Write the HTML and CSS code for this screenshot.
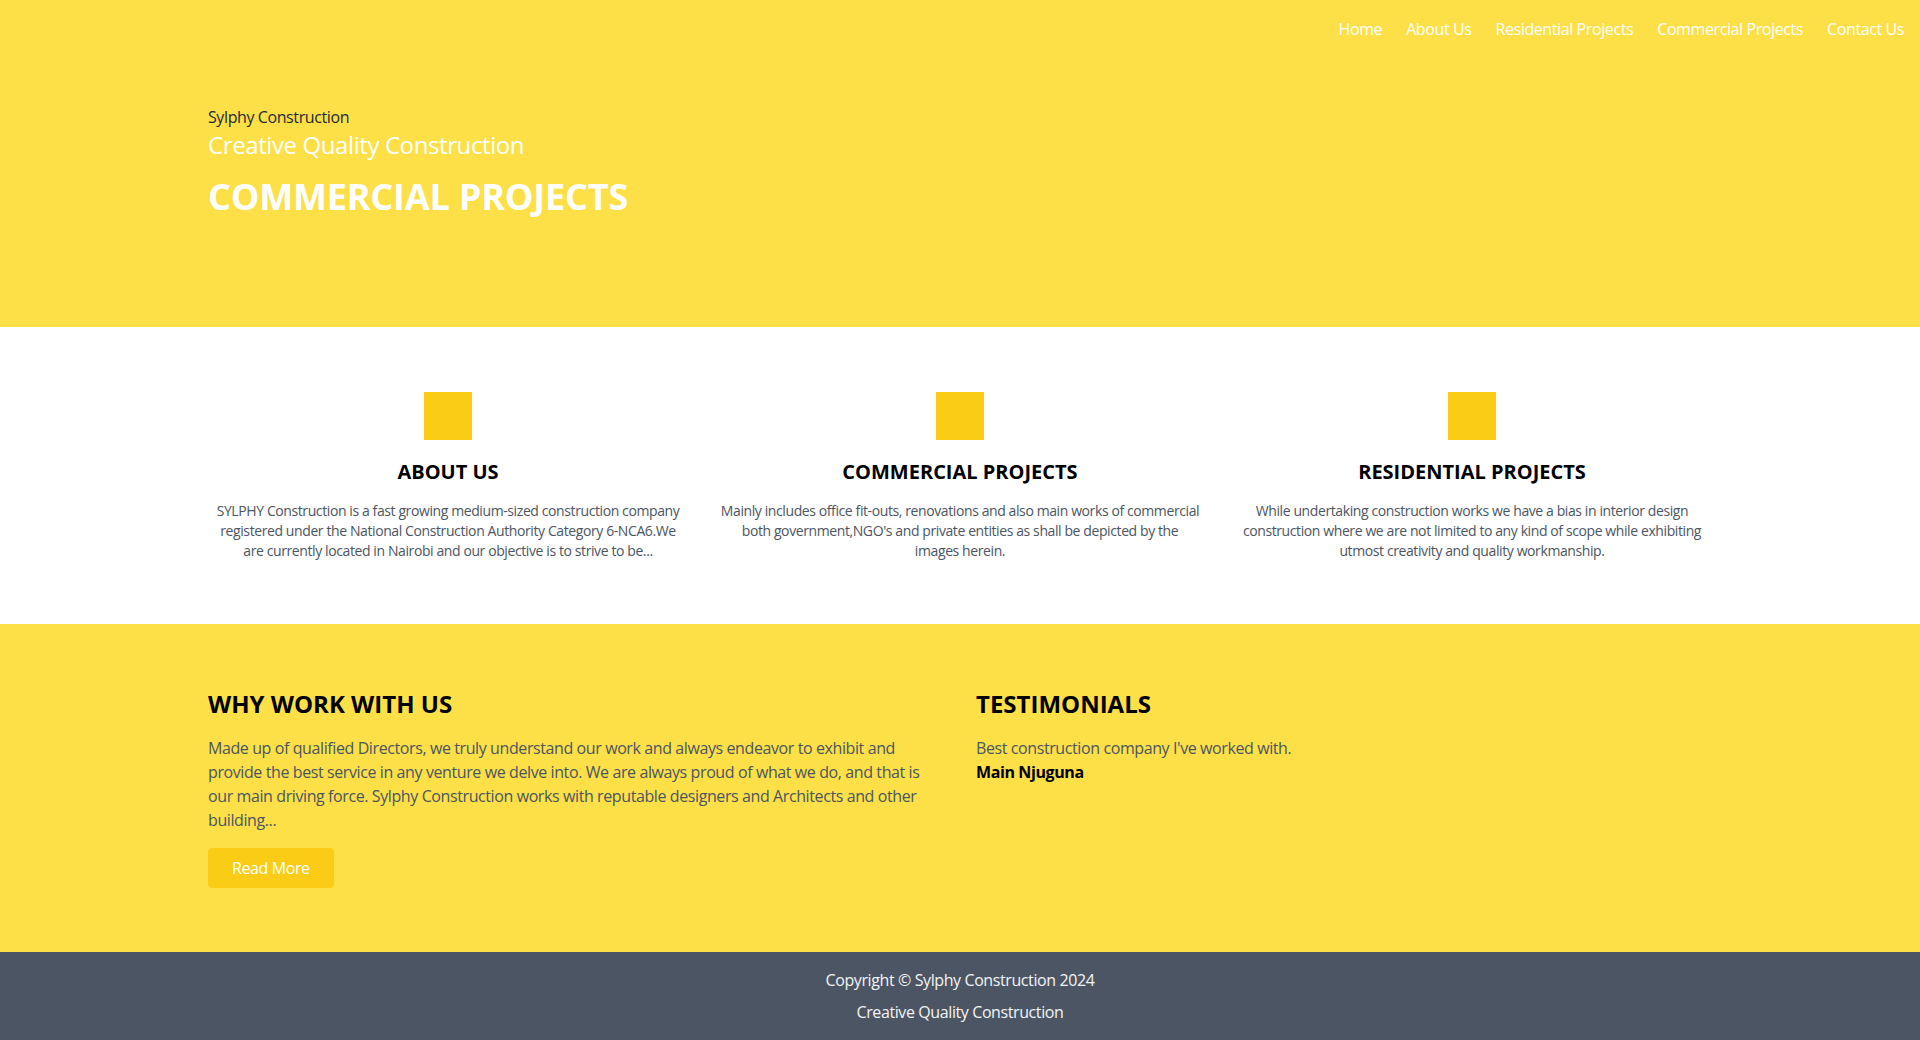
FILE: index.html
```html
<!DOCTYPE html>
<html lang="en">
<head>
<meta charset="utf-8">
<title>Commercial Projects - Sylphy Construction</title>
<link rel="stylesheet" href="styles.css">
</head>
<body>
<header class="hero">
  <nav class="nav">
    <a href="#">Home</a>
    <a href="#">About Us</a>
    <a href="#">Residential Projects</a>
    <a href="#">Commercial Projects</a>
    <a href="#">Contact Us</a>
  </nav>
  <div class="container hero-body">
    <p class="brand">Sylphy Construction</p>
    <p class="tagline">Creative Quality Construction</p>
    <h1 class="hero-title">COMMERCIAL PROJECTS</h1>
  </div>
</header>

<section class="features">
  <div class="container feature-grid">
    <div class="feature">
      <div class="feature-icon"></div>
      <h2 class="feature-title">ABOUT US</h2>
      <p class="feature-text">SYLPHY Construction is a fast growing medium-sized construction company registered under the National Construction Authority Category 6-NCA6.We<br>are currently located in Nairobi and our objective is to strive to be...</p>
    </div>
    <div class="feature">
      <div class="feature-icon"></div>
      <h2 class="feature-title">COMMERCIAL PROJECTS</h2>
      <p class="feature-text">Mainly includes office fit-outs, renovations and also main works of commercial both government,NGO's and private entities as shall be depicted by the images herein.</p>
    </div>
    <div class="feature">
      <div class="feature-icon"></div>
      <h2 class="feature-title">RESIDENTIAL PROJECTS</h2>
      <p class="feature-text">While undertaking construction works we have a bias in interior design construction where we are not limited to any kind of scope while exhibiting utmost creativity and quality workmanship.</p>
    </div>
  </div>
</section>

<section class="why">
  <div class="container why-grid">
    <div class="why-col">
      <h2 class="section-title">WHY WORK WITH US</h2>
      <p class="why-text">Made up of qualified Directors, we truly understand our work and always endeavor to exhibit and provide the best service in any venture we delve into. We are always proud of what we do, and that is our main driving force. Sylphy Construction works with reputable designers and Architects and other building...</p>
      <a href="#" class="btn">Read More</a>
    </div>
    <div class="why-col">
      <h2 class="section-title">TESTIMONIALS</h2>
      <p class="why-text">Best construction company I've worked with.</p>
      <p class="author">Main Njuguna</p>
    </div>
  </div>
</section>

<footer class="footer">
  <p>Copyright © Sylphy Construction 2024</p>
  <p class="footer-sub">Creative Quality Construction</p>
</footer>
</body>
</html>
```

FILE: styles.css
```css
* { box-sizing: border-box; }
html, body { margin: 0; padding: 0; }
body {
  font-family: "Open Sans", "Noto Sans", sans-serif;
  font-size: 16px;
  line-height: 24px;
  letter-spacing: -0.025em;
  color: #111827;
  background: #ffffff;
}
p, h1, h2 { margin: 0; }
h1, h2 { letter-spacing: 0; }
a { text-decoration: none; color: inherit; }

.container {
  max-width: 1536px;
  margin: 0 auto;
  padding: 0 16px;
}

.hero { background: #fde047; }
.nav {
  display: flex;
  justify-content: flex-end;
  gap: 24px;
  padding: 17px 16px 15px;
}
.nav a { color: #ffffff; font-size: 16px; line-height: 24px; }

.hero-body { padding-top: 49px; padding-bottom: 110px; }
.brand { color: #1f2937; font-size: 16px; line-height: 24px; }
.tagline { color: #ffffff; font-size: 24px; line-height: 32px; }
.hero-title {
  color: #ffffff;
  font-size: 36px;
  line-height: 40px;
  font-weight: 700;
  margin-top: 16px;
  letter-spacing: -0.005em;
}

.features { background: #ffffff; padding: 65px 0 63px; }
.feature-grid {
  display: grid;
  grid-template-columns: repeat(3, 1fr);
  gap: 32px;
}
.feature {
  display: flex;
  flex-direction: column;
  align-items: center;
  text-align: center;
}
.feature-icon { width: 48px; height: 48px; background: #facc15; }
.feature-title {
  font-size: 20px;
  line-height: 28px;
  font-weight: 700;
  color: #000;
  margin-top: 18px;
}
.feature-text {
  font-size: 14px;
  line-height: 20px;
  color: #4b5563;
  margin-top: 15px;
}

.why { background: #fde047; padding: 64px 0; }
.why-grid {
  display: grid;
  grid-template-columns: 1fr 1fr;
  gap: 32px;
}
.section-title { font-size: 24px; line-height: 32px; font-weight: 700; color: #000; }
.why-text { color: #4b5563; margin-top: 16px; }
.author { font-weight: 700; color: #000; }
.btn {
  display: inline-block;
  margin-top: 16px;
  background: #facc15;
  color: #fff;
  padding: 8px 24px;
  border-radius: 4px;
  line-height: 24px;
}

.footer {
  background: #4b5563;
  color: #f3f4f6;
  text-align: center;
  padding: 16px 0;
}
.footer-sub { margin-top: 8px; }
```
